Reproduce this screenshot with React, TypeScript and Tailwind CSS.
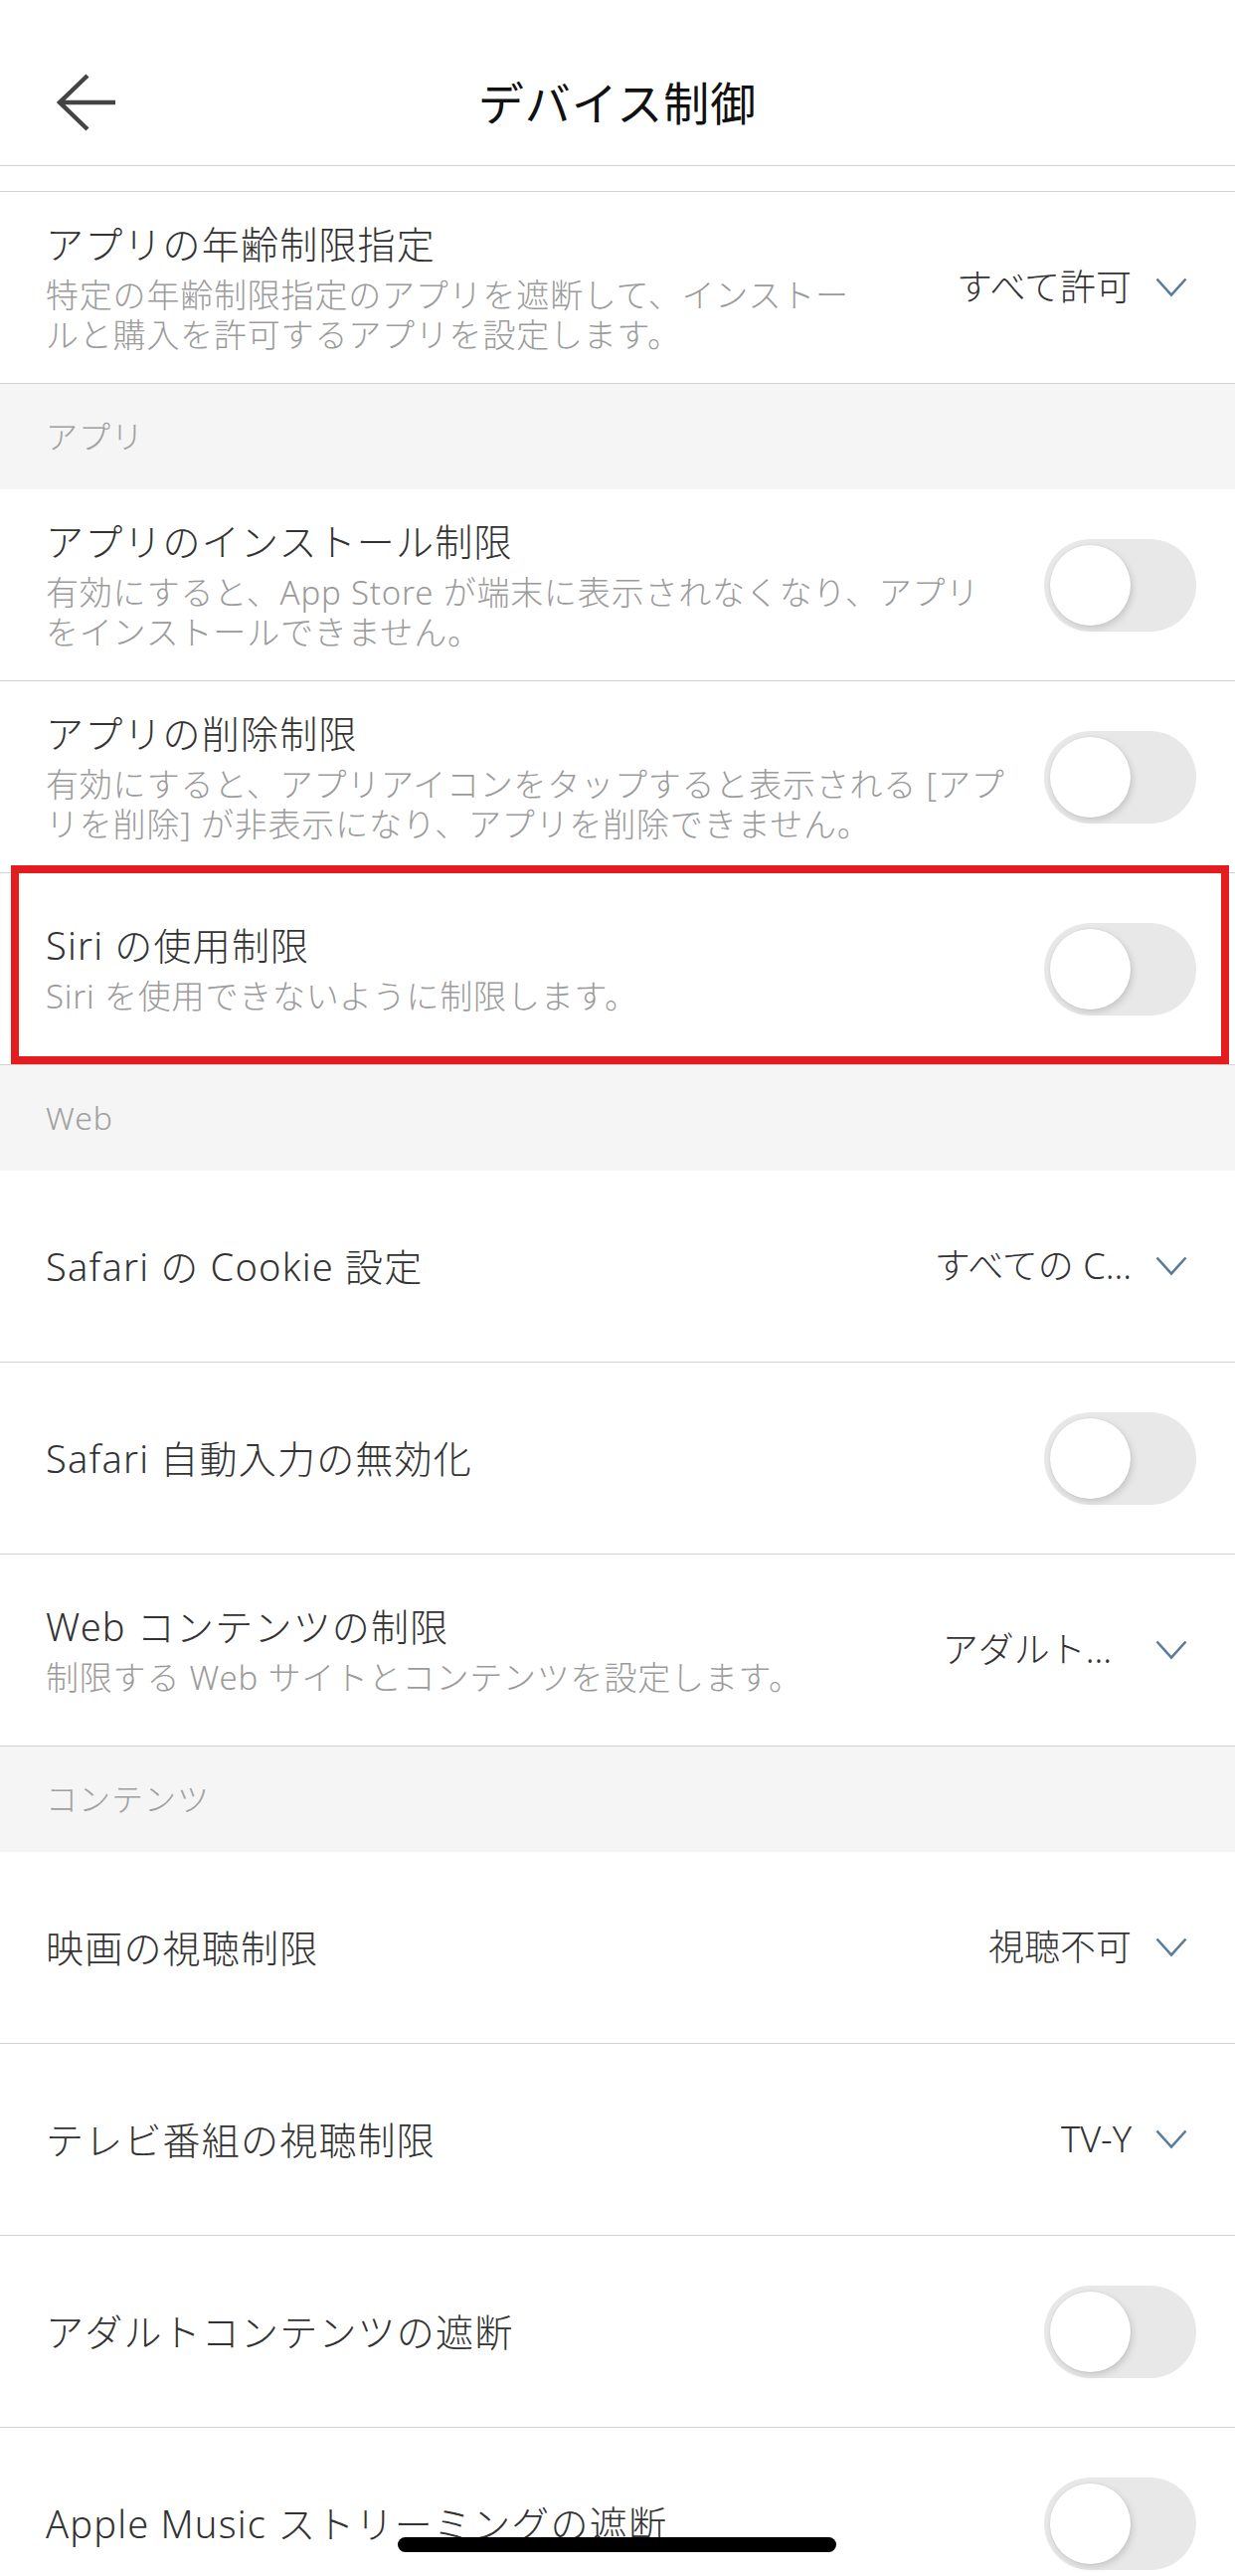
import React from "react";

type Row = {
  title: string;
  sub?: string[];
  value?: string;
  valuePad?: string;
  toggle?: boolean;
  highlight?: boolean;
};

type Section = { label?: string; rows: Row[] };

const sections: Section[] = [
  {
    rows: [
      {
        title: "アプリの年齢制限指定",
        sub: ["特定の年齢制限指定のアプリを遮断して、インストー", "ルと購入を許可するアプリを設定します。"],
        value: "すべて許可",
      },
    ],
  },
  {
    label: "アプリ",
    rows: [
      {
        title: "アプリのインストール制限",
        sub: ["有効にすると、App Store が端末に表示されなくなり、アプリ", "をインストールできません。"],
        toggle: true,
      },
      {
        title: "アプリの削除制限",
        sub: ["有効にすると、アプリアイコンをタップすると表示される [アプ", "リを削除] が非表示になり、アプリを削除できません。"],
        toggle: true,
      },
      {
        title: "Siri の使用制限",
        sub: ["Siri を使用できないように制限します。"],
        toggle: true,
        highlight: true,
      },
    ],
  },
  {
    label: "Web",
    rows: [
      { title: "Safari の Cookie 設定", value: "すべての C..." },
      { title: "Safari 自動入力の無効化", toggle: true },
      {
        title: "Web コンテンツの制限",
        sub: ["制限する Web サイトとコンテンツを設定します。"],
        value: "アダルト...",
        valuePad: "pr-[20px]",
      },
    ],
  },
  {
    label: "コンテンツ",
    rows: [
      { title: "映画の視聴制限", value: "視聴不可" },
      { title: "テレビ番組の視聴制限", value: "TV-Y" },
      { title: "アダルトコンテンツの遮断", toggle: true },
      { title: "Apple Music ストリーミングの遮断", toggle: true },
    ],
  },
];

function Chevron() {
  return (
    <svg width="32" height="20" viewBox="0 0 32 20" fill="none" className="shrink-0">
      <path d="M1.5 1.5 L16 17.5 L30.5 1.5" stroke="#5a7b9a" strokeWidth="2.6" />
    </svg>
  );
}

function Toggle() {
  return (
    <div className="relative w-[153px] h-[93px] rounded-full bg-[#e8e8e8] shrink-0">
      <div className="absolute left-[6px] top-[6px] w-[81px] h-[81px] rounded-full bg-white shadow-[2px_3px_7px_rgba(0,0,0,0.14),0_0_0_1px_rgba(0,0,0,0.03)]" />
    </div>
  );
}

function SettingRow({ row }: { row: Row }) {
  return (
    <div className="relative flex items-center h-[193px] border-b border-[#d2d2d2] pl-[46px]">
      <div className="flex-1 min-w-0">
        <div className="text-[38px] leading-[48px] text-[#333] tracking-[1.2px] whitespace-nowrap">{row.title}</div>
        {row.sub && (
          <div className="mt-[8px] text-[33px] leading-[40px] text-[#9b9b9b] tracking-[0.8px]">
            {row.sub.map((line) => (
              <div key={line} className="whitespace-nowrap">
                {line}
              </div>
            ))}
          </div>
        )}
      </div>
      {row.toggle ? (
        <div className="pr-[39px]">
          <Toggle />
        </div>
      ) : (
        <div className="flex items-center gap-[24px] pr-[48px]">
          <span className={`text-[36px] leading-[48px] text-[#333] whitespace-nowrap ${row.valuePad ?? ""}`}>
            {row.value}
          </span>
          <Chevron />
        </div>
      )}
      {row.highlight && (
        <div className="absolute left-[11px] right-[6px] top-[-8px] bottom-0 border-[8px] border-[#e41b1f] pointer-events-none" />
      )}
    </div>
  );
}

export default function App() {
  return (
    <div className="relative w-[1242px] h-[2590px] overflow-hidden bg-white font-light font-['Noto_Sans','Noto_Sans_CJK_JP',sans-serif]">
      {/* ヘッダー */}
      <header className="h-[167px] border-b border-[#cfcfcf] pt-[38px]">
        <div className="flex items-center h-[129px] px-[56px]">
          <svg width="62" height="58" viewBox="0 0 62 58" fill="none" className="shrink-0">
            <path d="M4 29 H60 M32 2 L4 29 L32 56" stroke="#444" strokeWidth="4.5" />
          </svg>
          <h1 className="flex-1 text-center text-[46px] leading-[56px] text-[#111] font-normal tracking-[1px]">
            デバイス制御
          </h1>
          <div className="w-[62px] shrink-0" />
        </div>
      </header>

      <div className="h-[26px] border-b border-[#d2d2d2]" />

      {sections.map((section, i) => (
        <section key={i}>
          {section.label && (
            <div className="h-[106px] bg-[#f5f5f5] pl-[46px] flex items-center text-[32px] text-[#a0a0a0] tracking-[1px]">
              {section.label}
            </div>
          )}
          {section.rows.map((row) => (
            <SettingRow key={row.title} row={row} />
          ))}
        </section>
      ))}

      {/* ホームインジケーター */}
      <div className="absolute left-[400px] bottom-[24px] w-[441px] h-[15px] rounded-full bg-black" />
    </div>
  );
}
